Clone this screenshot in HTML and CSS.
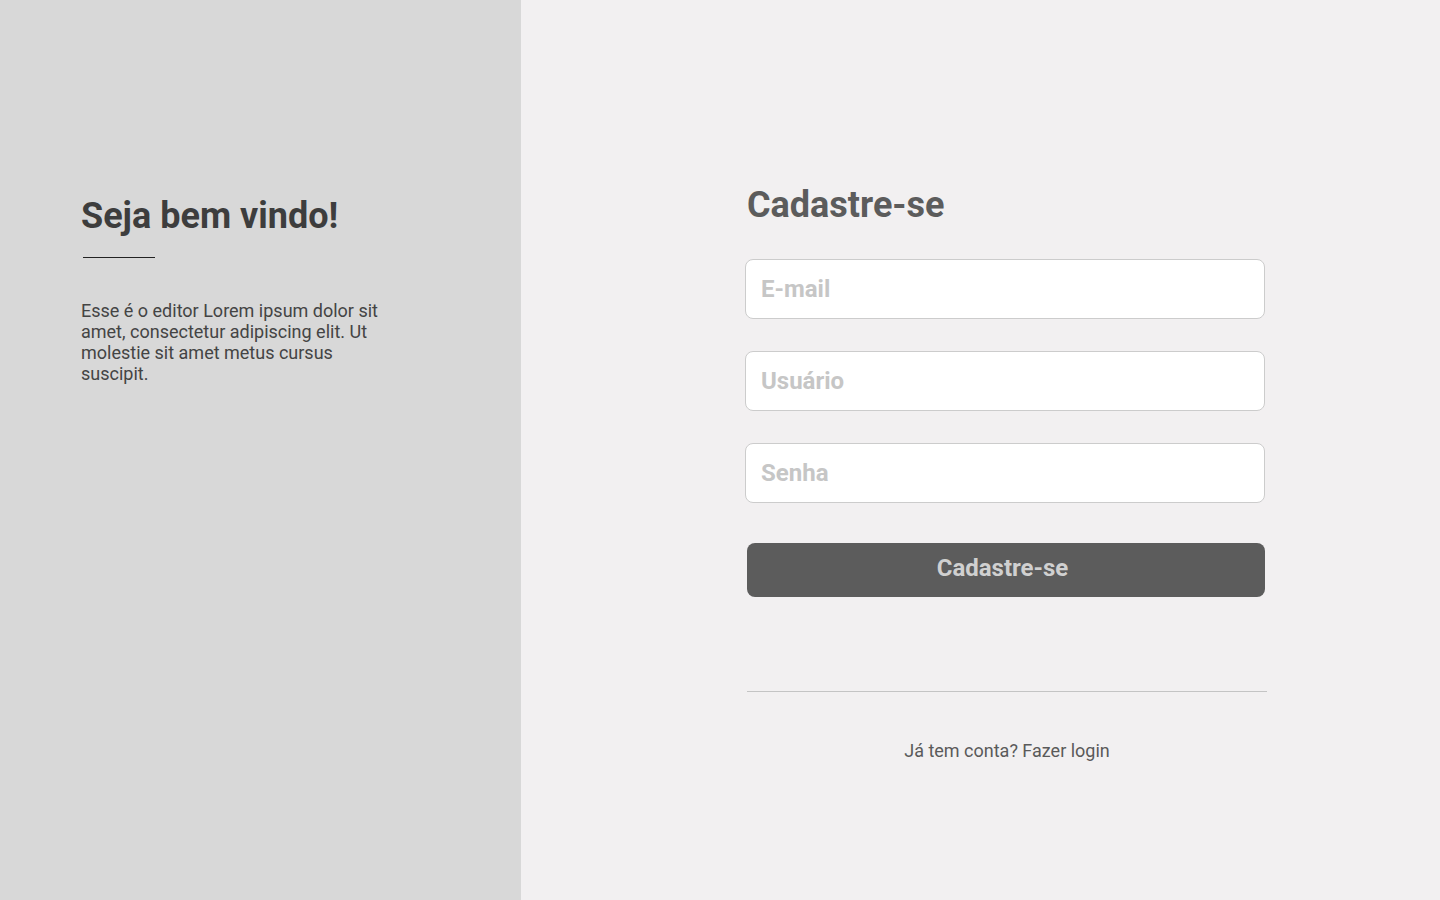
FILE: index.html
```html
<!DOCTYPE html>
<html lang="pt-BR">
<head>
<meta charset="utf-8">
<title>Cadastre-se</title>
<link rel="stylesheet" href="styles.css">
</head>
<body>
<div class="page">
  <aside class="welcome">
    <h1 class="welcome-title">Seja bem vindo!</h1>
    <div class="welcome-rule"></div>
    <p class="welcome-text">Esse é o editor Lorem ipsum dolor sit amet, consectetur adipiscing elit. Ut molestie sit amet metus cursus suscipit.</p>
  </aside>
  <main class="signup">
    <form class="form">
      <h2 class="form-title">Cadastre-se</h2>
      <input class="field" type="email" placeholder="E-mail">
      <input class="field" type="text" placeholder="Usuário">
      <input class="field" type="password" placeholder="Senha">
      <button class="submit" type="button">Cadastre-se</button>
      <div class="divider"></div>
      <p class="login">Já tem conta? Fazer login</p>
    </form>
  </main>
</div>
</body>
</html>
```
FILE: styles.css
```css
* { box-sizing: border-box; }
html, body { margin: 0; padding: 0; }
body {
  font-family: Roboto, "Liberation Sans", sans-serif;
  width: 1440px;
  height: 900px;
  overflow: hidden;
}
.page {
  display: flex;
  height: 900px;
}
.welcome {
  width: 521px;
  flex: none;
  background: #d8d8d8;
  padding: 195px 0 0 81px;
}
.welcome-title {
  margin: 0;
  font-size: 36px;
  line-height: 42px;
  font-weight: 700;
  color: #3d3d3d;
}
.welcome-rule {
  margin: 20px 0 0 2px;
  width: 72px;
  height: 1px;
  background: #222;
}
.welcome-text {
  margin: 42px 0 0;
  width: 310px;
  font-size: 18px;
  line-height: 21px;
  color: #444;
}
.signup {
  flex: 1;
  background: #f2f0f1;
  padding: 184px 0 0 224px;
}
.form {
  width: 522px;
  display: flex;
  flex-direction: column;
}
.form-title {
  margin: 0 0 33px 2px;
  font-size: 36px;
  line-height: 42px;
  font-weight: 700;
  color: #5c5c5c;
}
.field {
  width: 520px;
  height: 60px;
  margin: 0 0 32px;
  border: 1px solid #cccccc;
  border-radius: 8px;
  background: #fff;
  padding: 0 15px;
  font-family: inherit;
  font-size: 24px;
  font-weight: 700;
  color: #555;
  outline: none;
}
.field::placeholder {
  color: #c6c6c6;
  opacity: 1;
}
.field:last-of-type { margin-bottom: 40px; }
.submit {
  width: 518px;
  height: 54px;
  margin-left: 2px;
  border: none;
  border-radius: 8px;
  background: #5c5c5c;
  color: #d0d0d0;
  font-family: inherit;
  font-size: 24px;
  font-weight: 700;
  padding: 0 7px 5px 0;
}
.divider {
  margin: 94px 0 0 2px;
  width: 520px;
  height: 1px;
  background: #c4c4c4;
}
.login {
  margin: 48px 0 0 2px;
  width: 520px;
  text-align: center;
  font-size: 18px;
  line-height: 21px;
  color: #5a5a5a;
}
```
